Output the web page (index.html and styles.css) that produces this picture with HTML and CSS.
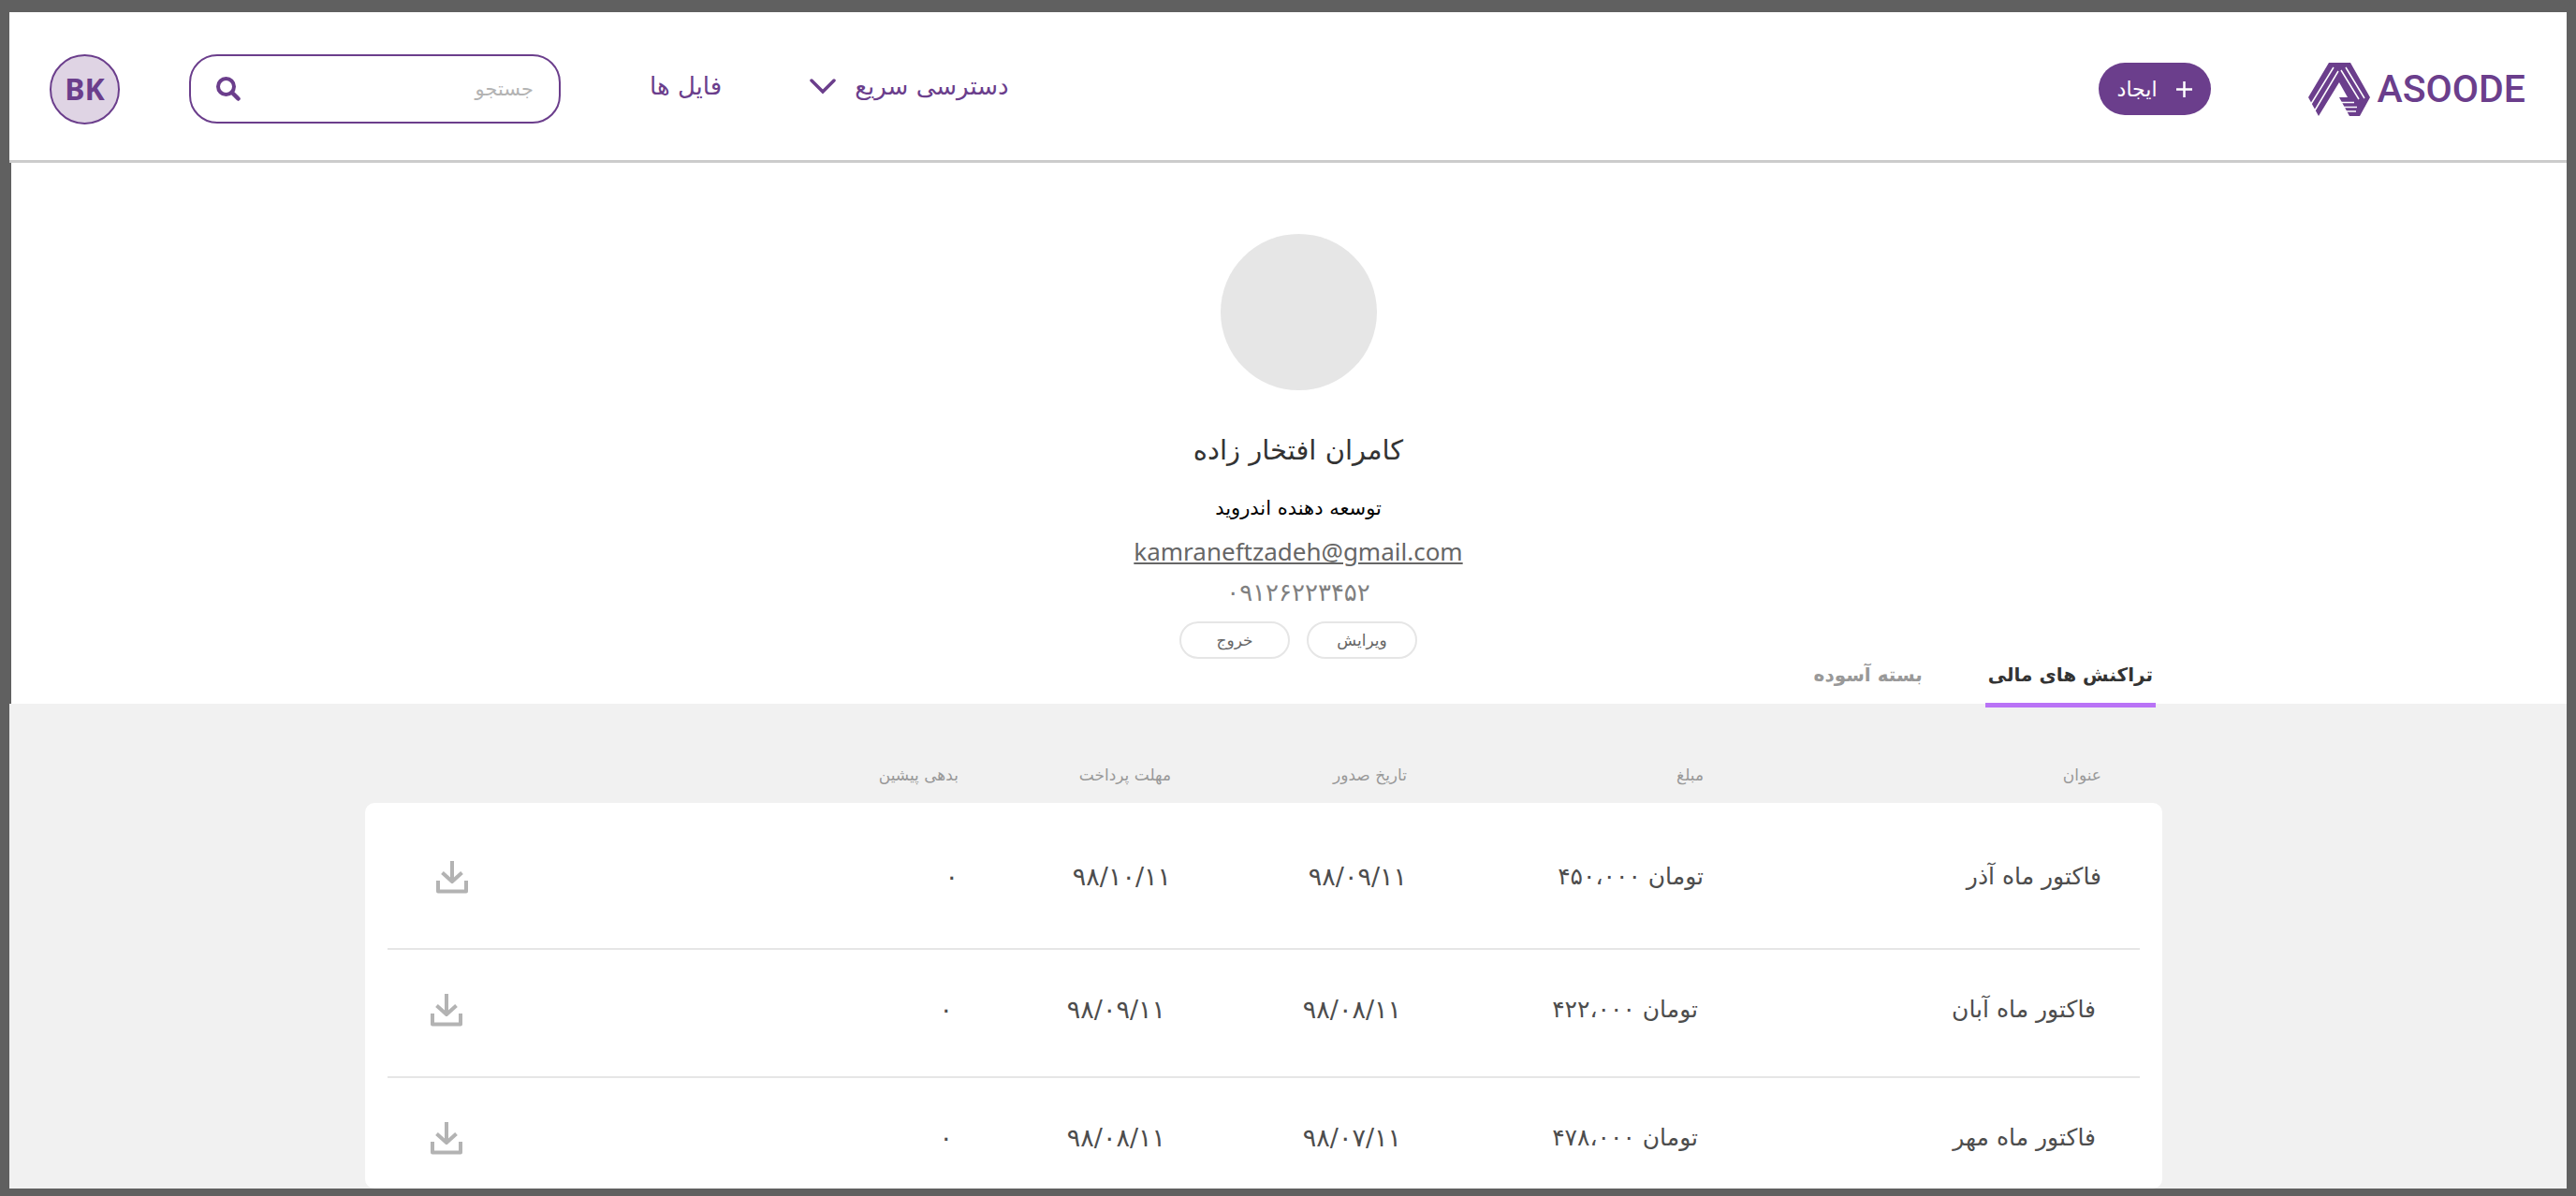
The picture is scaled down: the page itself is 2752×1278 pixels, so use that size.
FILE: index.html
```html
<!DOCTYPE html>
<html lang="fa" dir="rtl">
<head>
  <meta charset="utf-8">
  <meta name="viewport" content="width=device-width, initial-scale=1">
  <title>آسوده</title>
  <link rel="stylesheet" href="styles.css">
</head>
<body>
  <svg class="sprite" aria-hidden="true">
    <symbol id="download" viewBox="0 0 34 36">
      <path d="M17 1v21M6.500 13.500 17 23l10.500-9.500M2 22v11.500h30V22" fill="none" stroke="currentColor" stroke-width="4" stroke-linejoin="round"/>
    </symbol>
  </svg>

  <header class="topbar">
    <a class="brand" href="#" dir="ltr">
      <svg class="brand-mark" viewBox="0 0 66 57" aria-hidden="true">
        <path d="M22 0h23l21 37-11 20H44L33 37h9L33 21 11 57 0 37z" fill="currentColor"/>
        <path d="M27 5 3 44M32 9 7 51M35 8l19 31M40 5l20 33M32 42.500h17M35 47.500h17M39 52h12" fill="none" stroke="#fff" stroke-width="1.500"/>
      </svg>
      <span class="brand-name">ASOODE</span>
    </a>
    <button class="create" type="button">
      <svg class="create-icon" viewBox="0 0 17 17" aria-hidden="true"><path d="M8.500 0v17M0 8.500h17" stroke="currentColor" stroke-width="2.500"/></svg>
      <span>ایجاد</span>
    </button>
    <nav class="menu">
      <button class="menu-item" type="button">
        <span>دسترسی سریع</span>
        <svg class="menu-arrow" viewBox="0 0 28 17" aria-hidden="true"><path d="M2 2l12 12L26 2" fill="none" stroke="currentColor" stroke-width="3.500" stroke-linecap="round"/></svg>
      </button>
      <a class="menu-item" href="#">فایل ها</a>
    </nav>
    <form class="search">
      <input class="search-input" type="search" placeholder="جستجو" aria-label="جستجو">
      <svg class="search-icon" viewBox="0 0 26 26" aria-hidden="true"><circle cx="10.500" cy="10.500" r="8.500" fill="none" stroke="currentColor" stroke-width="4"/><path d="M17 17l6.500 6.500" stroke="currentColor" stroke-width="4.500" stroke-linecap="round"/></svg>
    </form>
    <a class="user" href="#">BK</a>
  </header>

  <main>
    <section class="profile">
      <div class="photo"></div>
      <h1 class="name">کامران افتخار زاده</h1>
      <p class="role">توسعه دهنده اندروید</p>
      <a class="email" href="mailto:kamraneftzadeh@gmail.com" dir="ltr">kamraneftzadeh@gmail.com</a>
      <p class="phone">۰۹۱۲۶۲۲۳۴۵۲</p>
      <div class="actions">
        <button class="action" type="button">ویرایش</button>
        <button class="action" type="button">خروج</button>
      </div>
    </section>

    <nav class="tabs">
      <a class="tab tab-active" href="#">تراکنش های مالی</a>
      <a class="tab" href="#">بسته آسوده</a>
    </nav>

    <section class="billing">
      <table class="invoices">
        <thead>
          <tr><th scope="col">عنوان</th><th scope="col">مبلغ</th><th scope="col">تاریخ صدور</th><th scope="col">مهلت پرداخت</th><th scope="col">بدهی پیشین</th></tr>
        </thead>
        <tbody>
          <tr>
            <td class="title">فاکتور ماه آذر</td><td class="amount">تومان ۴۵۰،۰۰۰</td><td>۹۸/۰۹/۱۱</td><td>۹۸/۱۰/۱۱</td><td>۰</td>
            <td class="file"><a href="#" aria-label="دانلود"><svg class="file-icon"><use href="#download"/></svg></a></td>
          </tr>
          <tr>
            <td class="title">فاکتور ماه آبان</td><td class="amount">تومان ۴۲۲،۰۰۰</td><td>۹۸/۰۸/۱۱</td><td>۹۸/۰۹/۱۱</td><td>۰</td>
            <td class="file"><a href="#" aria-label="دانلود"><svg class="file-icon"><use href="#download"/></svg></a></td>
          </tr>
          <tr>
            <td class="title">فاکتور ماه مهر</td><td class="amount">تومان ۴۷۸،۰۰۰</td><td>۹۸/۰۷/۱۱</td><td>۹۸/۰۸/۱۱</td><td>۰</td>
            <td class="file"><a href="#" aria-label="دانلود"><svg class="file-icon"><use href="#download"/></svg></a></td>
          </tr>
        </tbody>
      </table>
    </section>
  </main>
</body>
</html>
```

FILE: styles.css
```css
:root {
  --purple: #6b3e8c;
  --frame: #606060;
  --line: #e6e6e6;
  --muted: #999;
}

* {
  box-sizing: border-box;
}

body {
  margin: 0;
  padding: 13px 10px 10px;
  background: var(--frame);
  font-family: "DejaVu Sans", sans-serif;
  color: #4d4d4d;
}

h1, p {
  margin: 0;
}

a {
  color: inherit;
  text-decoration: none;
}

button, input {
  font: inherit;
  color: inherit;
}

.sprite {
  display: none;
}

/* Top bar */

.topbar {
  display: flex;
  align-items: center;
  height: 161px;
  padding: 6px 44px 0 43px;
  background: #fff;
  border-bottom: 3px solid #ccc;
  color: var(--purple);
}

.brand {
  display: flex;
  align-items: center;
  gap: 8px;
}

.brand-mark {
  width: 66px;
  height: 57px;
}

.brand-name {
  font: 500 41px/48px Roboto, sans-serif;
}

.create {
  display: flex;
  align-items: center;
  justify-content: center;
  gap: 20px;
  width: 120px;
  height: 56px;
  margin-inline-start: 104px;
  padding: 0;
  border: 0;
  border-radius: 28px;
  background: var(--purple);
  color: #fff;
  font-size: 22px;
}

.create-icon {
  width: 17px;
  height: 17px;
}

.menu {
  display: flex;
  gap: 94px;
  margin-inline: auto 95px;
  padding-bottom: 6px;
}

.menu-item {
  display: flex;
  align-items: center;
  gap: 20px;
  padding: 0;
  border: 0;
  background: none;
  font-size: 26px;
  line-height: 40px;
}

.menu-arrow {
  width: 28px;
  height: 17px;
}

.search {
  display: flex;
  align-items: center;
  width: 397px;
  height: 74px;
  padding: 0 27px;
  border: 2px solid var(--purple);
  border-radius: 30px;
}

.search-input {
  flex: 1;
  min-width: 0;
  padding: 0;
  border: 0;
  outline: 0;
  background: none;
  font-size: 21px;
}

.search-input::placeholder {
  color: #b3b3b3;
  opacity: 1;
}

.search-icon {
  width: 26px;
  height: 26px;
}

.user {
  display: grid;
  place-items: center;
  width: 75px;
  height: 75px;
  margin-inline-start: 74px;
  border: 2px solid var(--purple);
  border-radius: 50%;
  background: #dfd4e4;
  font: 700 32px/40px "Noto Sans", sans-serif;
}

/* Profile */

.profile,
.tabs {
  margin-left: 2px;
  background: #fff;
}

.profile {
  display: flex;
  flex-direction: column;
  align-items: center;
  padding: 76px 0 0 20px;
}

.photo {
  width: 167px;
  height: 167px;
  border-radius: 50%;
  background: var(--line);
}

.name {
  margin-top: 40px;
  color: #333;
  font-size: 29px;
  font-weight: 400;
  line-height: 48px;
}

.role {
  margin-top: 22px;
  color: #000;
  font-size: 21px;
  line-height: 32px;
}

.email {
  margin-top: 10px;
  color: #666;
  font: 26px/40px "Noto Sans", sans-serif;
  text-decoration: underline;
}

.phone {
  margin-top: 4px;
  color: #808080;
  font-size: 26px;
  line-height: 40px;
}

.actions {
  display: flex;
  gap: 18px;
  margin-top: 11px;
}

.action {
  width: 118px;
  height: 40px;
  padding: 0;
  border: 2px solid var(--line);
  border-radius: 20px;
  background: #fff;
  color: #666;
  font-size: 17px;
}

/* Tabs */

.tabs {
  display: flex;
  gap: 64px;
  padding-top: 1px;
  padding-inline-start: 439px;
}

.tab {
  height: 47px;
  padding: 0 3px;
  color: var(--muted);
  font-size: 20px;
  font-weight: 700;
  line-height: 32px;
}

.tab-active {
  position: relative;
  color: #333;
}

.tab-active::after {
  content: "";
  position: absolute;
  inset: auto 0 -4px;
  height: 5px;
  background: #b973f6;
}

/* Invoices */

.billing {
  padding: 0 432px 0 380px;
  background: #f1f1f1;
}

.invoices,
.invoices thead,
.invoices tbody {
  display: block;
}

/* The card hangs slightly over the page's lower edge. */
.invoices {
  margin-bottom: -2px;
}

.invoices tr {
  display: grid;
  grid-template-columns: 425fr 317fr 252fr 227fr 558fr;
  margin: 0 24px;
}

.invoices th,
.invoices td {
  padding: 0;
  text-align: start;
  white-space: nowrap;
}

.invoices thead tr {
  padding: 64px 41px 18px 52px;
  color: var(--muted);
  font-size: 17px;
  line-height: 24px;
}

.invoices th {
  font-weight: 400;
}

.invoices tbody {
  border-radius: 10px;
  background: #fff;
  font-size: 27px;
  line-height: 40px;
}

.invoices tbody tr {
  grid-template-columns: 425fr 317fr 252fr 227fr 524fr 34px;
  padding: 44px 47px 51px 46px;
  border-bottom: 2px solid var(--line);
}

.invoices tbody tr:first-child {
  padding: 59px 41px 56px 52px;
}

.invoices tbody tr:last-child {
  padding-bottom: 34px;
  border-bottom: 0;
}

.invoices .title,
.invoices .amount {
  font-size: 25px;
}

.file-icon {
  display: block;
  width: 34px;
  height: 36px;
  margin-top: 2px;
  color: #b3b3b3;
}
```
